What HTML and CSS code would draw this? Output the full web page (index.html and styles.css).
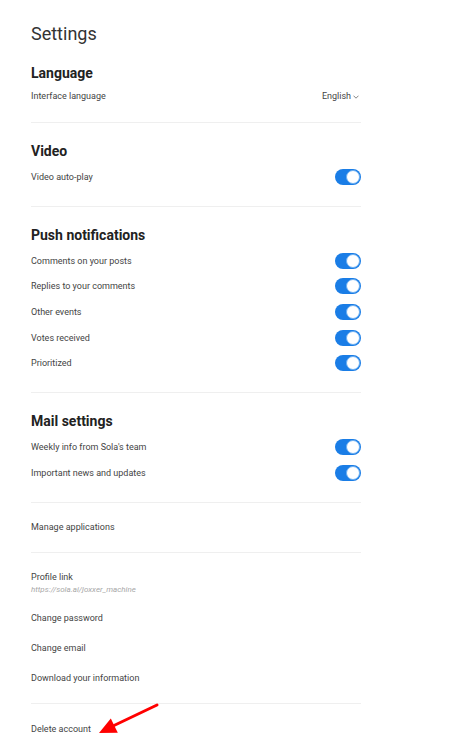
FILE: index.html
```html
<!DOCTYPE html>
<html>
<head>
<meta charset="utf-8">
<link rel="stylesheet" href="styles.css">
</head>
<body>
<div class="page">
  <h1 class="title">Settings</h1>

  <section class="section">
    <h2 class="heading">Language</h2>
    <div class="row row-short">
      <span class="label">Interface language</span>
      <span class="select">English
        <svg class="chev" width="6" height="4" viewBox="0 0 6 4"><path d="M0.5 0.7 L3 3.2 L5.5 0.7" fill="none" stroke="#666" stroke-width="0.8"/></svg>
      </span>
    </div>
  </section>

  <section class="section">
    <h2 class="heading">Video</h2>
    <div class="row"><span class="label">Video auto-play</span><span class="toggle"><span class="knob"></span></span></div>
  </section>

  <section class="section">
    <h2 class="heading">Push notifications</h2>
    <div class="row"><span class="label">Comments on your posts</span><span class="toggle"><span class="knob"></span></span></div>
    <div class="row"><span class="label">Replies to your comments</span><span class="toggle"><span class="knob"></span></span></div>
    <div class="row"><span class="label">Other events</span><span class="toggle"><span class="knob"></span></span></div>
    <div class="row"><span class="label">Votes received</span><span class="toggle"><span class="knob"></span></span></div>
    <div class="row"><span class="label">Prioritized</span><span class="toggle"><span class="knob"></span></span></div>
  </section>

  <section class="section">
    <h2 class="heading">Mail settings</h2>
    <div class="row"><span class="label">Weekly info from Sola's team</span><span class="toggle"><span class="knob"></span></span></div>
    <div class="row"><span class="label">Important news and updates</span><span class="toggle"><span class="knob"></span></span></div>
  </section>

  <section class="section plain">
    <div class="link">Manage applications</div>
  </section>

  <section class="section plain list">
    <div class="profile">
      <div class="link">Profile link</div>
      <div class="url">https://sola.ai/joxxer_machine</div>
    </div>
    <div class="link">Change password</div>
    <div class="link">Change email</div>
    <div class="link">Download your information</div>
  </section>

  <section class="section plain last">
    <div class="link">Delete account</div>
  </section>

  <svg class="arrow" width="460" height="752" viewBox="0 0 460 752">
    <line x1="157" y1="705" x2="114" y2="725.5" stroke="#ff0000" stroke-width="3" stroke-linecap="round"/>
    <polygon points="99,733 110.8,718.4 117.8,732.8" fill="#ff0000"/>
  </svg>
</div>
</body>
</html>
```

FILE: styles.css
```css
* { box-sizing: border-box; }
html, body { margin: 0; padding: 0; background: #fff; }
body { font-family: Roboto, "Noto Sans", Arial, sans-serif; color: #444; }

.page {
  position: relative;
  width: 460px;
  height: 752px;
  padding: 23px 0 0 31px;
  overflow: hidden;
}

.title {
  margin: 0;
  width: 330px;
  font-size: 18px;
  line-height: 22px;
  font-weight: 400;
  color: #333;
}

.section {
  width: 330px;
  padding: 18px 0 16px;
  border-bottom: 1px solid #efefef;
}

.heading {
  margin: 0 0 3px;
  font-size: 14px;
  line-height: 20px;
  font-weight: 700;
  color: #222;
}

.row {
  display: flex;
  align-items: center;
  justify-content: space-between;
  height: 25.7px;
}
.row-short { height: 20px; }

.label, .link {
  font-size: 9px;
  line-height: 20px;
  color: #444;
}

.select {
  display: flex;
  align-items: center;
  gap: 2px;
  padding-right: 2px;
  font-size: 9px;
  color: #444;
}
.chev { display: block; margin-top: 1px; }

.toggle {
  position: relative;
  display: block;
  width: 26px;
  height: 16px;
  border-radius: 8px;
  background: #1a7de6;
}
.knob {
  position: absolute;
  top: 1px;
  right: 1px;
  width: 14px;
  height: 14px;
  border-radius: 50%;
  background: #fff;
  border: 1px solid #6aaef2;
}

.plain { padding-top: 14px; padding-bottom: 15px; }
.list { display: flex; flex-direction: column; gap: 10px; }
.profile { margin-bottom: 3px; }
.url {
  margin-top: -2px;
  font-size: 8px;
  line-height: 10px;
  font-style: italic;
  color: #a8a8a8;
}
.last { border-bottom: none; padding-top: 15px; }

.arrow {
  position: absolute;
  left: 0;
  top: 0;
  pointer-events: none;
}
```
